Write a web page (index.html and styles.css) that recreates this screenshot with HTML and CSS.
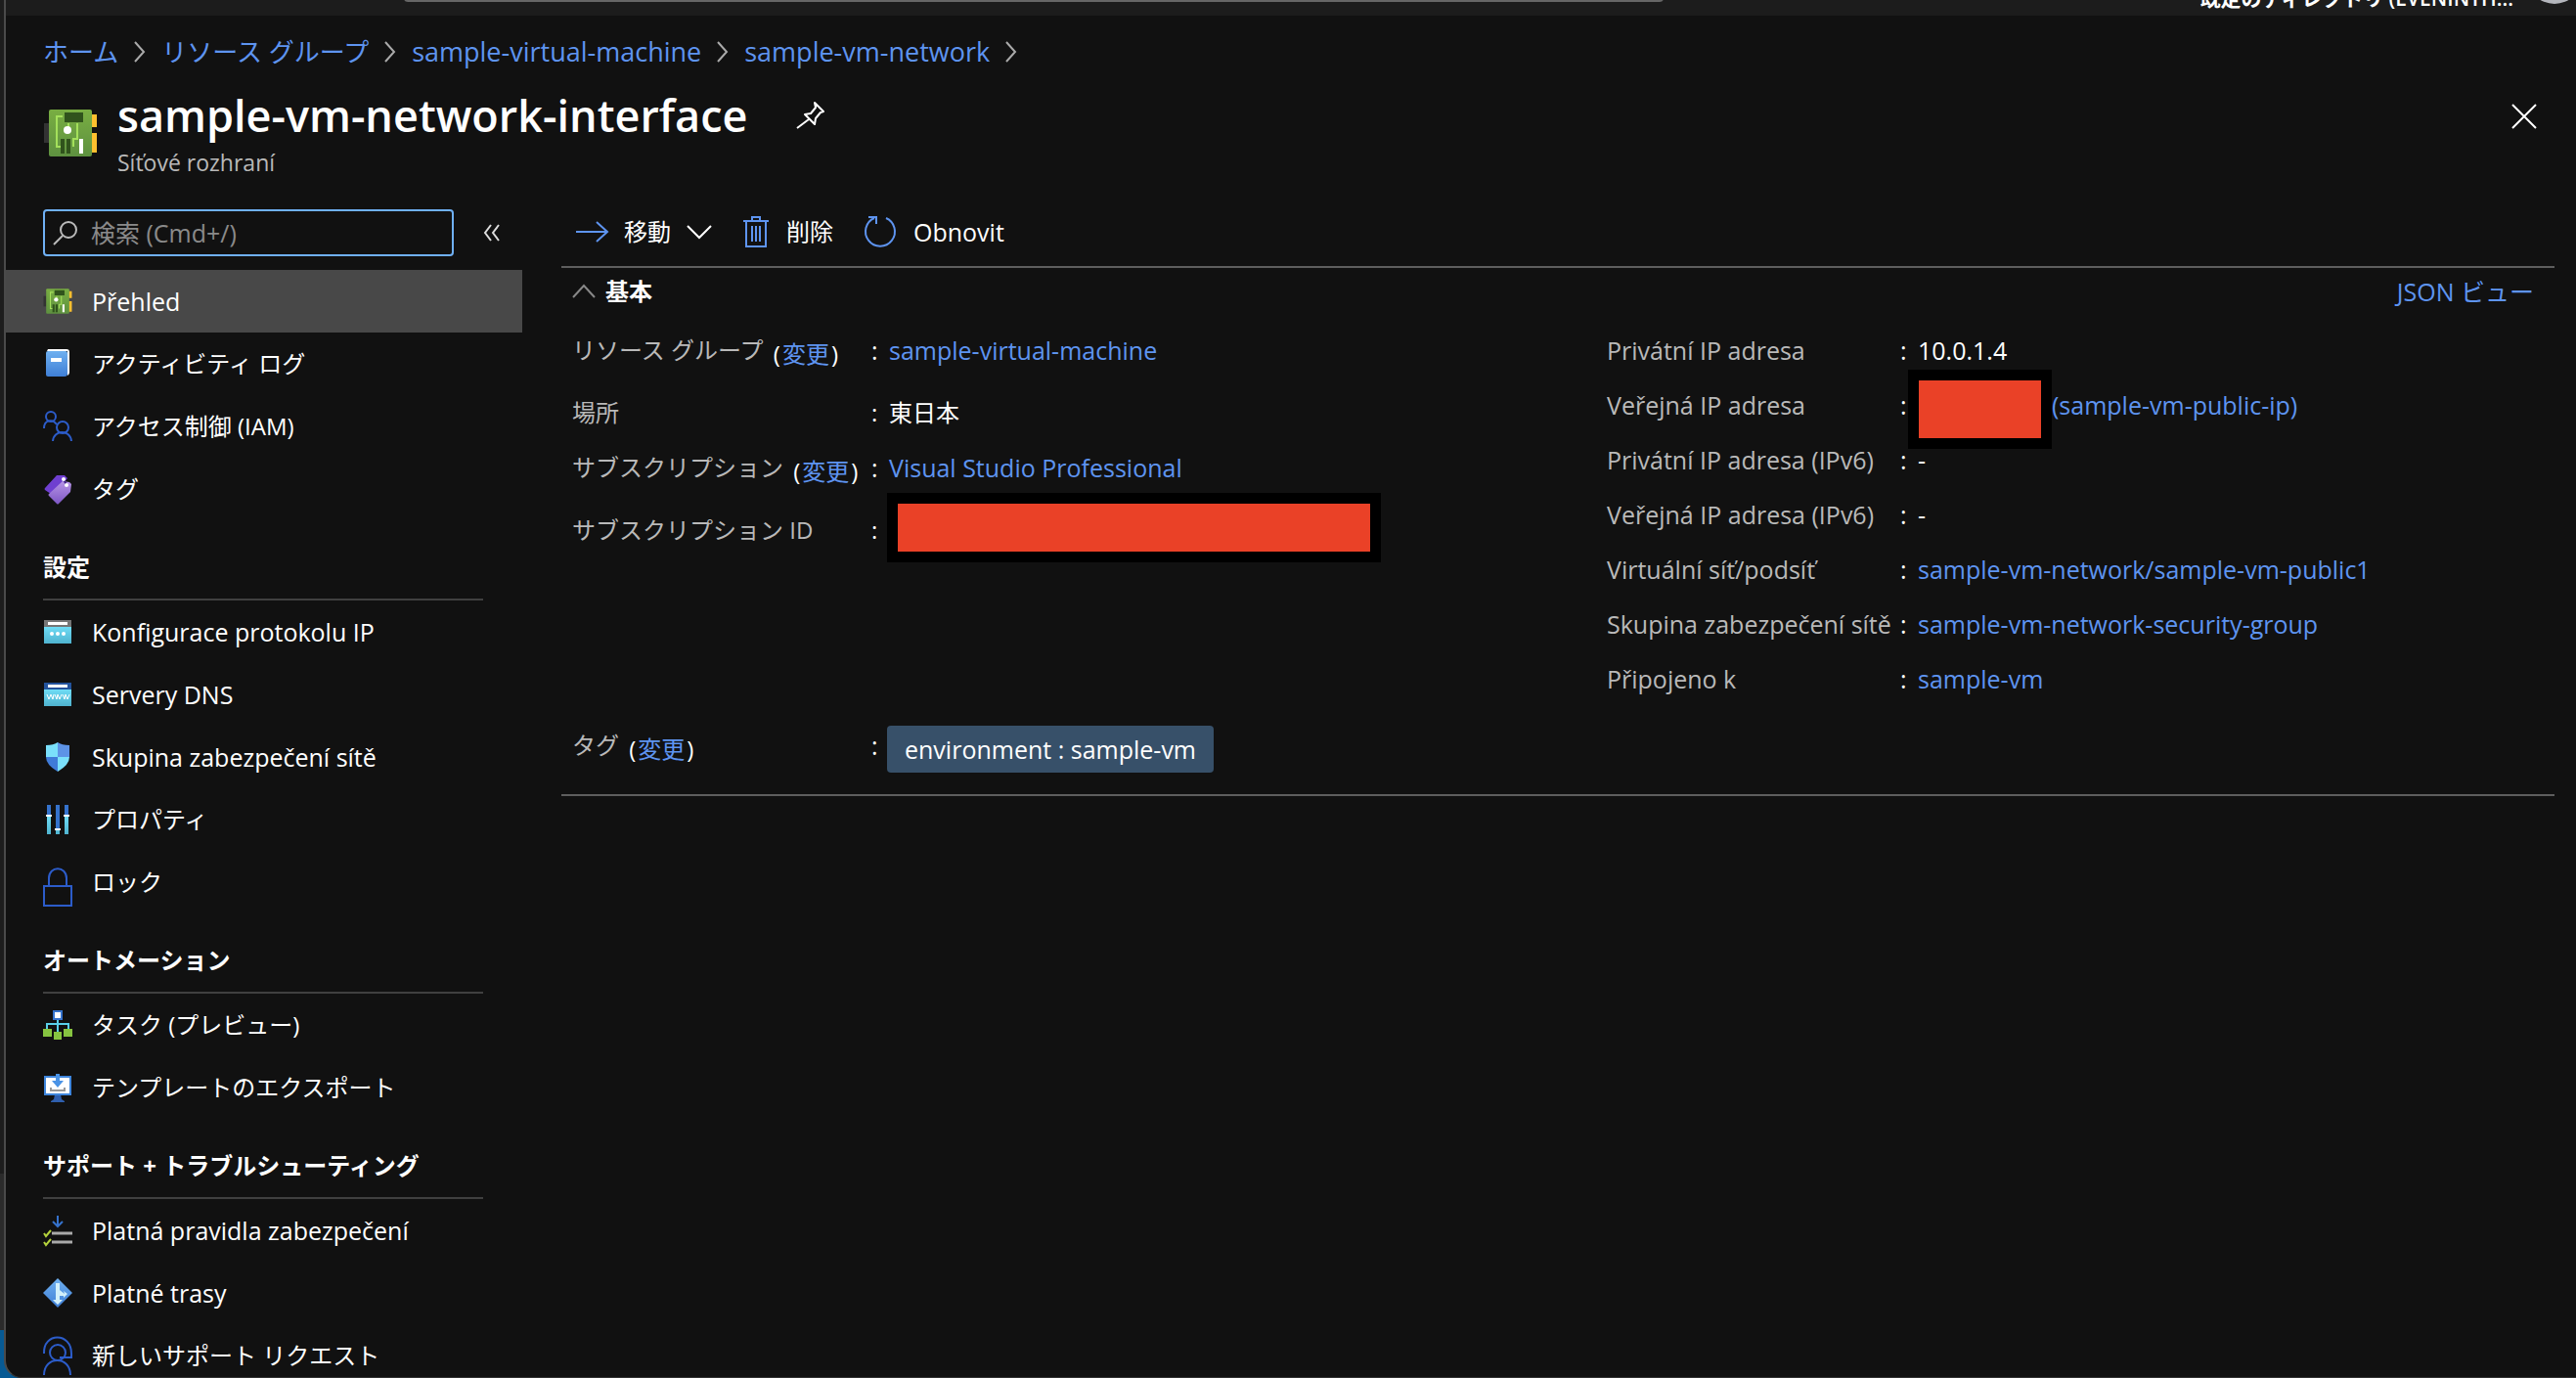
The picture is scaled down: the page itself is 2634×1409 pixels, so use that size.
FILE: index.html
```html
<!DOCTYPE html>
<html lang="ja">
<head>
<meta charset="utf-8">
<meta name="viewport" content="width=device-width, initial-scale=1">
<title>sample-vm-network-interface</title>
<link rel="stylesheet" href="styles.css">
</head>
<body>
<svg class="defs" width="0" height="0" aria-hidden="true">
  <defs>
    <linearGradient id="board" x1="0" y1="0" x2="0" y2="1"><stop offset="0" stop-color="#79ae42"/><stop offset="1" stop-color="#5e9140"/></linearGradient>
    <linearGradient id="blue" x1="0" y1="0" x2="0" y2="1"><stop offset="0" stop-color="#6fb0f0"/><stop offset="1" stop-color="#3f7fd6"/></linearGradient>
    <linearGradient id="cyan" x1="0" y1="0" x2="0" y2="1"><stop offset="0" stop-color="#6fdcf5"/><stop offset="1" stop-color="#4fb3cf"/></linearGradient>
    <linearGradient id="violet" x1="0" y1="0" x2="0" y2="1"><stop offset="0" stop-color="#b795e6"/><stop offset="1" stop-color="#7d56c4"/></linearGradient>
    <symbol id="nic" viewBox="0 0 56 48">
      <path d="M1 14h6v20H1z" fill="#333"/>
      <path d="M49 5h6v13h-6zM49 24h6v20h-6z" fill="#fdc02f"/>
      <rect x="6" width="44" height="48" rx="2" fill="url(#board)"/>
      <path d="M20 7h-6v31h6M35 14v16h-4v8M26 21v-7" fill="none" stroke="#a4e05b" stroke-width="2"/>
      <path d="M22 3h19v10H22zM18 30h4v15h-4zM24 30h4v15h-4z" fill="#30531c"/>
      <path d="M37 30h4v15h-4z" fill="#fff"/>
      <circle cx="25" cy="21" r="4" fill="#fff"/>
    </symbol>
  </defs>
</svg>
<div class="backdrop" aria-hidden="true"></div>
<div class="shell">
  <div class="topbar">
    <div class="global-search"></div>
    <span class="directory">既定のディレクトリ (EVENINTH...</span>
    <span class="avatar"></span>
  </div>

  <header class="header">
    <nav class="crumbs" aria-label="breadcrumb">
      <a href="#">ホーム</a>
      <svg width="12" height="22" viewBox="0 0 12 22"><path d="M1 1l9 10-9 10"/></svg>
      <a href="#">リソース グループ</a>
      <svg width="12" height="22" viewBox="0 0 12 22"><path d="M1 1l9 10-9 10"/></svg>
      <a href="#" class="latin">sample-virtual-machine</a>
      <svg width="12" height="22" viewBox="0 0 12 22"><path d="M1 1l9 10-9 10"/></svg>
      <a href="#" class="latin">sample-vm-network</a>
      <svg width="12" height="22" viewBox="0 0 12 22"><path d="M1 1l9 10-9 10"/></svg>
    </nav>
    <div class="title-row">
      <svg class="resource-icon" width="56" height="48"><use href="#nic"/></svg>
      <div class="titles">
        <div class="title-line">
          <h1>sample-vm-network-interface</h1>
          <button class="icon-button" type="button" aria-label="ピン留め">
            <svg width="30" height="30" viewBox="0 0 30 30" fill="none" stroke="#fff" stroke-width="2" stroke-linejoin="round"><path d="M19 2l9 9-3 1-5 6-1 6-10-10 6-1 5-6zM13 19L1 28"/></svg>
          </button>
        </div>
        <p class="subtitle">Síťové rozhraní</p>
      </div>
      <button class="icon-button close" type="button" aria-label="閉じる">
        <svg width="26" height="26" viewBox="0 0 26 26" fill="none" stroke="#fff" stroke-width="2"><path d="M1 1l24 24M25 1L1 25"/></svg>
      </button>
    </div>
  </header>

  <div class="body">
    <aside class="sidebar">
      <div class="search-row">
        <label class="search">
          <svg width="26" height="26" viewBox="0 0 26 26" fill="none" stroke="#bbb" stroke-width="2"><circle cx="16" cy="10" r="8"/><path d="M10 16l-9 9"/></svg>
          <input type="text" placeholder="検索 (Cmd+/)" aria-label="検索">
        </label>
        <button class="icon-button" type="button" aria-label="折りたたむ">
          <svg width="18" height="18" viewBox="0 0 18 18" fill="none" stroke="#ddd" stroke-width="2"><path d="M8 1L2 9l6 8M16 1l-6 8 6 8"/></svg>
        </button>
      </div>

      <nav class="menu">
        <a href="#" class="item latin selected">
          <svg width="30" height="32"><use href="#nic" y="3" width="30" height="26"/></svg>Přehled</a>
        <a href="#" class="item">
          <svg width="30" height="32" viewBox="0 0 30 32"><path d="M5 1h19a3 3 0 0 1 3 3v21a4 4 0 0 1-2 3V3H4z" fill="#fff"/><path d="M5 3h18a2 2 0 0 1 2 2v21a3 3 0 0 1-3 3H5a2 2 0 0 1-2-2V5a2 2 0 0 1 2-2z" fill="url(#blue)"/><path d="M8 10h11v4H8z" fill="#fff"/></svg>アクティビティ ログ</a>
        <a href="#" class="item">
          <svg width="30" height="32" viewBox="0 0 30 32" fill="none" stroke="#2c5cc9" stroke-width="2"><circle cx="8" cy="6" r="5"/><path d="M1 18c0-9 9-10 13-4"/><circle cx="20" cy="17" r="6"/><path d="M10 31c1-12 18-12 19 0"/></svg>アクセス制御 (IAM)</a>
        <a href="#" class="item">
          <svg width="30" height="32" viewBox="0 0 30 32"><path d="M14 2h8l3 3-14 18-9-6q-1-1 0-2z" fill="#6f3fd0"/><path d="M20 8l7 1 2 2-1 8-12 12q-1 1-2 0l-8-8q-1-1 0-2z" fill="url(#violet)"/><path d="M21 6l3 6" stroke="#41258a" stroke-width="2"/><circle cx="21" cy="6" r="2" fill="#fff"/><circle cx="24" cy="12" r="2" fill="#fff"/></svg>タグ</a>

        <h2>設定</h2>
        <a href="#" class="item latin">
          <svg width="30" height="32" viewBox="0 0 30 32"><path d="M1 4h28v7H1z" fill="#767676"/><path d="M1 11h28v17H1z" fill="url(#cyan)"/><path d="M5 6h20v3H5z" fill="#fff"/><g fill="#fff"><circle cx="9" cy="18" r="2"/><circle cx="15" cy="18" r="2"/><circle cx="21" cy="18" r="2"/></g></svg>Konfigurace protokolu IP</a>
        <a href="#" class="item latin">
          <svg width="30" height="32" viewBox="0 0 30 32"><path d="M1 4h28v7H1z" fill="#24539c"/><path d="M1 11h28v17H1z" fill="url(#cyan)"/><path d="M5 6h20v3H5z" fill="#fff"/><path d="M4 16l2 5 2-5 2 5 1-5M12 16l2 5 1-5 2 5 2-5M20 16l2 5 1-5 2 5 2-5" fill="none" stroke="#fff" stroke-width="1"/></svg>Servery DNS</a>
        <a href="#" class="item latin">
          <svg width="30" height="32" viewBox="0 0 30 32"><path d="M15 1v15H3V4q8 0 12-3z" fill="#7ae0fb"/><path d="M15 1v15h12V4q-8 0-12-3z" fill="#5d93e6"/><path d="M3 16h12v15Q3 24 3 16z" fill="#3f7bd8"/><path d="M27 16H15v15q12-7 12-15z" fill="#7ae0fb"/></svg>Skupina zabezpečení sítě</a>
        <a href="#" class="item">
          <svg width="30" height="32" viewBox="0 0 30 32"><path d="M4 1h4v12H4zM13 1h4v26h-4zM22 1h4v12h-4z" fill="#3572cc"/><path d="M4 13h4v18H4zM13 27h4v4h-4zM22 13h4v18h-4z" fill="url(#cyan)"/><path d="M3 11h6v2H3zM12 25h6v2h-6zM21 11h6v2h-6z" fill="#fff"/></svg>プロパティ</a>
        <a href="#" class="item">
          <svg width="30" height="32" viewBox="0 0 30 32" fill="none" stroke="#2c5cc9" stroke-width="2"><path d="M1 20h28v20H1zM6 20v-8C6-1 24-1 24 12v8"/></svg>ロック</a>

        <h2>オートメーション</h2>
        <a href="#" class="item">
          <svg width="30" height="32" viewBox="0 0 30 32"><path d="M15 10v14M4 21v-6h22v6" fill="none" stroke="#59cfe8" stroke-width="2"/><path d="M10 1h10v10H10z" fill="#3572cc"/><path d="M12 3h6v6h-6z" fill="#fff"/><path d="M0 20h9v8H0zM11 23h8v8h-8zM21 20h9v8h-9z" fill="#86c440"/></svg>タスク (プレビュー)</a>
        <a href="#" class="item">
          <svg width="30" height="32" viewBox="0 0 30 32"><path d="M12 23h6l1 5 3 2v1H8v-1l3-2z" fill="#2f5fae"/><path d="M1 4h28v20H1z" fill="#3f86dc"/><path d="M3 6h24v16H3z" fill="#fff"/><path d="M8 16v3h14v-3" fill="none" stroke="#999" stroke-width="2"/><path d="M13 2h4v7h4l-6 7-6-7h4z" fill="#4a93e6"/></svg>テンプレートのエクスポート</a>

        <h2>サポート + トラブルシューティング</h2>
        <a href="#" class="item latin">
          <svg width="30" height="32" viewBox="0 0 30 32" fill="none" stroke-width="2"><path d="M15 1v10M10 7l5 5 5-5" stroke="#3572cc"/><path d="M1 19l2 3 5-6M1 28l2 3 5-6" stroke="#b4d23c"/><path d="M9 19h21M9 28h21" stroke="#aaa" stroke-width="3"/></svg>Platná pravidla zabezpečení</a>
        <a href="#" class="item latin">
          <svg width="30" height="32" viewBox="0 0 30 32"><path d="M15 1l15 15-15 15L0 16z" fill="url(#blue)"/><path d="M13 6h4v7l5 4-1-3 4 3-4 4v-2h-4v4h3l-5 5-5-5h3z" fill="#d2f0fb"/></svg>Platné trasy</a>
        <a href="#" class="item">
          <svg width="30" height="40" viewBox="0 0 30 40" fill="none" stroke="#2c5cc9" stroke-width="2"><path d="M1 18C0-4 29-4 29 18v4H17"/><circle cx="15" cy="17" r="8"/><path d="M1 40c0-20 27-20 27 0"/></svg>新しいサポート リクエスト</a>
      </nav>
    </aside>

    <main class="main">
      <div class="toolbar">
        <button type="button" class="tool">
          <svg width="34" height="22" viewBox="0 0 34 22" fill="none" stroke="#5e94f0" stroke-width="2"><path d="M1 11h32M22 1l11 10-11 10"/></svg>
          <span>移動</span>
          <svg width="26" height="14" viewBox="0 0 26 14" fill="none" stroke="#fff" stroke-width="2"><path d="M1 1l12 12L25 1"/></svg>
        </button>
        <button type="button" class="tool wide">
          <svg width="26" height="34" viewBox="0 0 26 34" fill="none" stroke="#5e94f0" stroke-width="2"><path d="M0 6h26M3 6v26h20V6M9 6V2h8v4M9 11v16M13 11v16M17 11v16"/></svg>
          <span>削除</span>
        </button>
        <button type="button" class="tool">
          <svg width="34" height="34" viewBox="0 0 34 34" fill="none" stroke="#5e94f0" stroke-width="2"><path d="M22 3a15 15 0 1 1-12 0M4 2h8v7"/></svg>
          <span class="latin">Obnovit</span>
        </button>
      </div>

      <section class="essentials">
        <div class="essentials-head">
          <button type="button" class="tool collapse">
            <svg width="24" height="14" viewBox="0 0 24 14" fill="none" stroke="#888" stroke-width="2"><path d="M1 13L12 1l11 12"/></svg>
            <strong>基本</strong>
          </button>
          <a href="#" class="latin">JSON ビュー</a>
        </div>
        <div class="columns">
          <dl class="props left">
            <div class="prop tall"><dt>リソース グループ <span class="change">(<a href="#">変更</a>)</span></dt><dd class="latin"><a href="#">sample-virtual-machine</a></dd></div>
            <div class="prop"><dt>場所</dt><dd>東日本</dd></div>
            <div class="prop tall"><dt>サブスクリプション <span class="change">(<a href="#">変更</a>)</span></dt><dd class="latin"><a href="#">Visual Studio Professional</a></dd></div>
            <div class="prop"><dt>サブスクリプション ID</dt><dd><span class="redacted id"></span></dd></div>
          </dl>
          <dl class="props right latin">
            <div class="prop"><dt>Privátní IP adresa</dt><dd>10.0.1.4</dd></div>
            <div class="prop"><dt>Veřejná IP adresa</dt><dd><span class="redacted ip"></span><a href="#">(sample-vm-public-ip)</a></dd></div>
            <div class="prop"><dt>Privátní IP adresa (IPv6)</dt><dd>-</dd></div>
            <div class="prop"><dt>Veřejná IP adresa (IPv6)</dt><dd>-</dd></div>
            <div class="prop"><dt>Virtuální síť/podsíť</dt><dd><a href="#">sample-vm-network/sample-vm-public1</a></dd></div>
            <div class="prop"><dt>Skupina zabezpečení sítě</dt><dd><a href="#">sample-vm-network-security-group</a></dd></div>
            <div class="prop"><dt>Připojeno k</dt><dd><a href="#">sample-vm</a></dd></div>
          </dl>
        </div>
        <dl class="props tags">
          <div class="prop"><dt>タグ <span class="change">(<a href="#">変更</a>)</span></dt><dd class="latin"><span class="chip">environment : sample-vm</span></dd></div>
        </dl>
      </section>
    </main>
  </div>
</div>
</body>
</html>
```
FILE: styles.css
```css
:root {
  --bg: #111;
  --link: #5e94f0;
  --muted: #b9b9b9;
  --rule: #5e5e5e;
}

* { box-sizing: border-box; }

body {
  margin: 0;
  height: 100vh;
  display: flex;
  overflow: hidden;
  background: #000;
  color: #fff;
  font-family: "Open Sans", "Noto Sans CJK JP", sans-serif;
  font-size: 24px;
  line-height: 32px;
}

a { color: var(--link); text-decoration: none; }
h1, h2, p, dl, dd { margin: 0; }
svg { flex: none; overflow: visible; }
.defs { position: absolute; }
.latin { font-size: 25px; }

button {
  border: 0;
  padding: 0;
  background: none;
  color: inherit;
  font: inherit;
}

/* sliver of the windows behind */
.backdrop {
  flex: none;
  width: 20px;
  margin-right: -16px;
  background: linear-gradient(#1d1d1d 0 1200px, #2b2b2b 1200px 1360px, #075a94 1360px);
}

.shell {
  position: relative;
  flex: 1;
  min-width: 0;
  display: flex;
  flex-direction: column;
  overflow: hidden;
  background: var(--bg);
  border-left: 2px solid #4a4a4a;
  border-bottom: 1px solid #333;
  border-bottom-left-radius: 18px;
}

.topbar {
  flex: none;
  height: 16px;
  display: flex;
  align-items: flex-end;
  overflow: hidden;
  background: #1c1c1c;
}
.global-search {
  width: 49%;
  height: 60px;
  margin: 0 auto 14px 407px;
  border-radius: 4px;
  background: #666;
}
.directory {
  margin-bottom: 2px;
  font-size: 21px;
  font-weight: 600;
  white-space: nowrap;
}
.avatar {
  width: 56px;
  height: 56px;
  margin: 0 -6px 12px 14px;
  border-radius: 50%;
  background: #b4b6bc;
}

.header { flex: none; padding: 21px 40px 32px 38px; }
.crumbs {
  display: flex;
  align-items: center;
  gap: 16px;
  font-size: 26px;
}
.crumbs .latin { font-size: 27px; }
.crumbs svg { fill: none; stroke: #aaa; stroke-width: 2; }

.title-row { display: flex; align-items: center; gap: 20px; padding-top: 21px; }
.titles { flex: 1; }
.title-line { display: flex; align-items: center; gap: 50px; }
h1 { font-size: 45px; font-weight: 600; line-height: 56px; }
.subtitle { font-size: 23px; color: var(--muted); padding-top: 4px; }
.icon-button { display: flex; }
.close { align-self: flex-start; margin-top: 16px; }

.body { flex: 1; min-height: 0; display: flex; }

.sidebar { flex: none; width: 528px; overflow: hidden; }
.search-row {
  display: flex;
  align-items: center;
  gap: 30px;
  padding: 0 0 14px 38px;
}
.search {
  width: 420px;
  height: 48px;
  display: flex;
  align-items: center;
  gap: 13px;
  padding: 0 8px;
  border: 2px solid #6fb0f5;
  border-radius: 4px;
  font-size: 25px;
}
.search input {
  flex: 1;
  min-width: 0;
  padding: 0;
  border: 0;
  outline: 0;
  background: none;
  color: #fff;
  font: inherit;
}
.search input::placeholder { color: #8a8a8a; opacity: 1; }

.menu .item {
  height: 64px;
  display: flex;
  align-items: center;
  gap: 20px;
  padding-left: 38px;
  color: #fff;
  white-space: nowrap;
}
.menu .selected { background: #484848; }
.menu h2 {
  margin: 0 40px 0 38px;
  padding: 32px 0 16px;
  border-bottom: 2px solid #404040;
  font-size: 24px;
  font-weight: 700;
  line-height: 32px;
}

.main { flex: 1; min-width: 0; padding: 0 22px 0 40px; }
.toolbar {
  height: 60px;
  display: flex;
  align-items: center;
  gap: 32px;
  padding: 0 14px 12px;
  border-bottom: 2px solid var(--rule);
}
.tool { display: flex; align-items: center; gap: 16px; }
.wide { gap: 18px; }

.essentials { padding: 8px 11px 10px; border-bottom: 2px solid var(--rule); }
.essentials-head {
  display: flex;
  justify-content: space-between;
  padding-right: 10px;
}
.collapse { gap: 10px; }

.columns {
  display: grid;
  grid-template-columns: 1fr 1fr;
  gap: 100px;
  padding-top: 28px;
}
.props { --label: 306px; }
.right { --label: 300px; }
.prop {
  display: grid;
  grid-template-columns: var(--label) 1fr;
  height: 56px;
}
.tall { height: 64px; }
dt { color: var(--muted); white-space: nowrap; }
dd { display: flex; white-space: nowrap; }
dd::before { content: ":"; flex: none; width: 18px; }
.change { display: inline-block; padding: 4px 0 0 4px; vertical-align: top; color: #fff; }
.change a { margin: 0 2px; }

.redacted {
  flex: none;
  background: #ea4127;
  border: 11px solid #000;
}
.id { width: 505px; height: 71px; margin: -22px 0 0 -2px; }
.ip { width: 147px; height: 81px; margin: -20px 0 0 -10px; }

.tags { padding-top: 12px; }
.chip {
  height: 48px;
  margin: -4px 0 0 -2px;
  padding: 8px 18px;
  border-radius: 4px;
  background: #375069;
}
```
